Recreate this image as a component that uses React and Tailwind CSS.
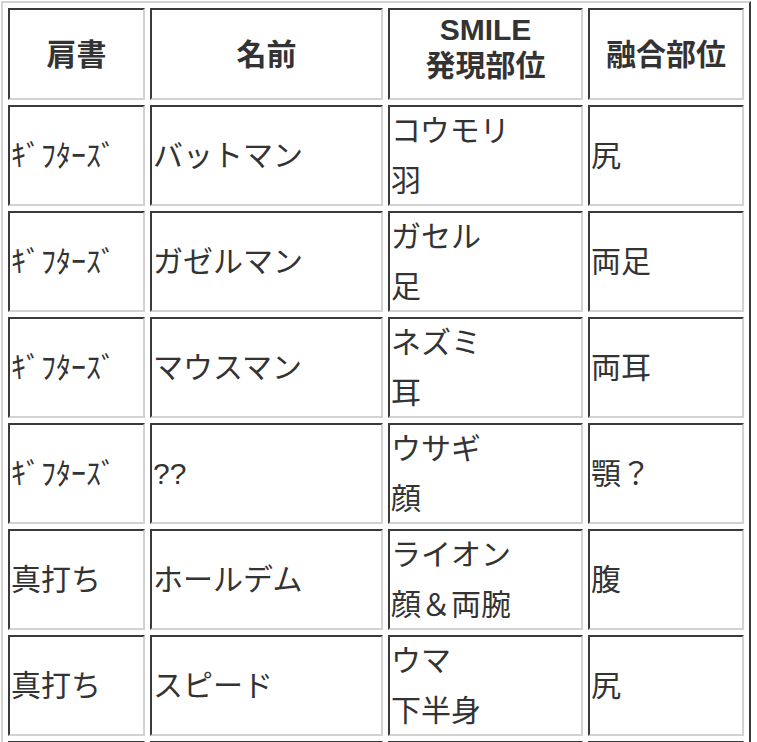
const rows = [
  { title: 'ｷﾞﾌﾀｰｽﾞ', name: 'バットマン', smile: ['コウモリ', '羽'], part: '尻' },
  { title: 'ｷﾞﾌﾀｰｽﾞ', name: 'ガゼルマン', smile: ['ガセル', '足'], part: '両足' },
  { title: 'ｷﾞﾌﾀｰｽﾞ', name: 'マウスマン', smile: ['ネズミ', '耳'], part: '両耳' },
  { title: 'ｷﾞﾌﾀｰｽﾞ', name: '??', smile: ['ウサギ', '顔'], part: '顎？' },
  { title: '真打ち', name: 'ホールデム', smile: ['ライオン', '顔＆両腕'], part: '腹' },
  { title: '真打ち', name: 'スピード', smile: ['ウマ', '下半身'], part: '尻' },
  { title: '', name: '', smile: ['', ''], part: '' },
]

function Cell({ head, children, className = '' }) {
  return (
    <div
      className={
        'flex items-center border-2 border-t-[#3a3a3a] border-l-[#3a3a3a] border-r-[#d2d2d2] border-b-[#d2d2d2] ' +
        (head ? 'h-[92px] justify-center font-bold text-center ' : 'h-[101px] pl-px ') +
        className
      }
    >
      {children}
    </div>
  )
}

export default function App() {
  return (
    <div className="bg-white min-h-screen overflow-hidden">
      <div
        className="ml-px mt-px w-[750px] border-2 border-t-[#d2d2d2] border-l-[#d2d2d2] border-r-[#3a3a3a] border-b-[#3a3a3a] p-[5px] grid grid-cols-[137px_233px_195px_156px] gap-[5px] text-[30px] text-[#333]"
        style={{ fontFamily: '"Liberation Sans", "Noto Sans CJK JP", sans-serif' }}
      >
        <Cell head>肩書</Cell>
        <Cell head>名前</Cell>
        <Cell head className="pb-3">
          <div className="leading-[36px]">
            SMILE
            <br />
            発現部位
          </div>
        </Cell>
        <Cell head>融合部位</Cell>

        {rows.map((r, i) => (
          <div key={i} className="contents">
            <Cell>{r.title}</Cell>
            <Cell>{r.name}</Cell>
            <Cell>
              <div className="leading-[50px]">
                {r.smile[0]}
                <br />
                {r.smile[1]}
              </div>
            </Cell>
            <Cell>{r.part}</Cell>
          </div>
        ))}
      </div>
    </div>
  )
}
